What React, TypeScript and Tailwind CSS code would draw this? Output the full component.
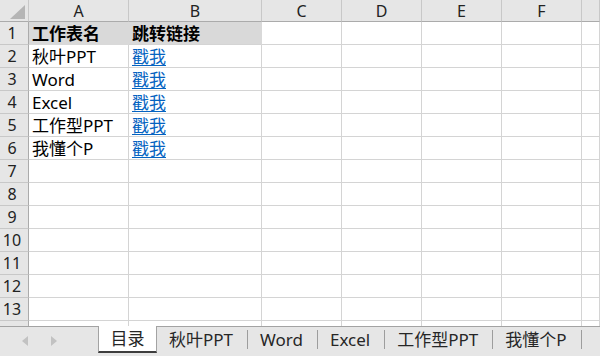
const FONT = "font-['Noto_Sans','Noto_Sans_CJK_SC',sans-serif]"

const cols = ["A", "B", "C", "D", "E", "F", ""]

const rows: { a: string; b: string }[] = [
  { a: "工作表名", b: "跳转链接" },
  { a: "秋叶PPT", b: "戳我" },
  { a: "Word", b: "戳我" },
  { a: "Excel", b: "戳我" },
  { a: "工作型PPT", b: "戳我" },
  { a: "我懂个P", b: "戳我" },
]

const sheets = ["秋叶PPT", "Word", "Excel", "工作型PPT", "我懂个P"]

function RowHead({ n }: { n: number }) {
  return (
    <div className="h-[23px] bg-[#e6e6e6] border-r border-b border-r-[#ababab] border-b-[#c8c8c8] flex items-end justify-center pr-[4px] text-[16px] leading-[21px] text-[#222]">
      {n}
    </div>
  )
}

export default function App() {
  const blank = Array.from({ length: 7 }, (_, i) => i + 7)
  return (
    <div className={`w-[600px] h-[356px] overflow-hidden bg-white flex flex-col ${FONT} text-black`}>
      <div className="grid grid-cols-[29px_100px_133px_80px_80px_80px_80px_1fr]">
        {/* corner */}
        <div className="h-[22px] bg-[#e6e6e6] border-r border-b border-r-[#c8c8c8] border-b-[#ababab] relative">
          <svg className="absolute left-[10px] top-[5px]" width="15" height="14" viewBox="0 0 15 14">
            <polygon points="15,0 15,14 0,14" fill="#b5b5b5" />
          </svg>
        </div>
        {cols.map((c, i) => (
          <div
            key={i}
            className="h-[22px] bg-[#e6e6e6] border-r border-b border-r-[#c8c8c8] border-b-[#ababab] flex items-center justify-center text-[16px] text-[#222]"
          >
            {c}
          </div>
        ))}

        {rows.map((r, i) => (
          <div key={i} className="contents">
            <RowHead n={i + 1} />
            <div
              className={`h-[23px] border-r border-b flex items-end pl-[3px] text-[17px] leading-[21px] ${
                i === 0 ? "bg-[#d9d9d9] border-[#d9d9d9] font-bold" : "border-[#d4d4d4]"
              }`}
            >
              {r.a}
            </div>
            <div
              className={`h-[23px] border-r border-b flex items-end pl-[3px] text-[17px] leading-[21px] ${
                i === 0 ? "bg-[#d9d9d9] border-[#d9d9d9] border-b-[#d4d4d4] font-bold" : "border-[#d4d4d4]"
              }`}
            >
              {i === 0 ? r.b : <span className="text-[#0563c1] underline underline-offset-2">{r.b}</span>}
            </div>
            {[0, 1, 2, 3, 4].map((k) => (
              <div key={k} className="h-[23px] border-r border-b border-[#d4d4d4]" />
            ))}
          </div>
        ))}

        {blank.map((n) => (
          <div key={n} className="contents">
            <RowHead n={n} />
            {[0, 1, 2, 3, 4, 5, 6].map((k) => (
              <div key={k} className="h-[23px] border-r border-b border-[#d4d4d4]" />
            ))}
          </div>
        ))}

        {/* partial row 14 */}
        <div className="h-[5px] bg-[#e6e6e6] border-r border-[#ababab]" />
        {[0, 1, 2, 3, 4, 5, 6].map((k) => (
          <div key={k} className="h-[5px] border-r border-[#d4d4d4]" />
        ))}
      </div>

      {/* sheet tabs */}
      <div className="h-[30px] bg-[#e6e6e6] border-t border-[#a3a3a3] flex items-start text-[17px] text-[#262626]">
        <div className="w-[98px] h-full flex items-center gap-[21px] pl-[22px] pb-[2px]">
          <svg width="7" height="10" viewBox="0 0 7 10">
            <polygon points="6,0 6,10 0,5" fill="#c2c2c2" />
          </svg>
          <svg width="7" height="10" viewBox="0 0 7 10">
            <polygon points="1,0 1,10 7,5" fill="#c2c2c2" />
          </svg>
        </div>
        <div className="-mt-px w-[59px] h-[27px] bg-white border-x border-x-[#a3a3a3] border-b-2 border-b-[#3d3d3d] flex items-center justify-center pt-[1px]">
          目录
        </div>
        {sheets.map((s) => (
          <div key={s} className="flex items-center h-[25px]">
            <span className="pl-[12px] pr-[14px] leading-[20px]">{s}</span>
            <span className="w-px h-[19px] bg-[#9d9d9d]" />
          </div>
        ))}
      </div>
    </div>
  )
}
